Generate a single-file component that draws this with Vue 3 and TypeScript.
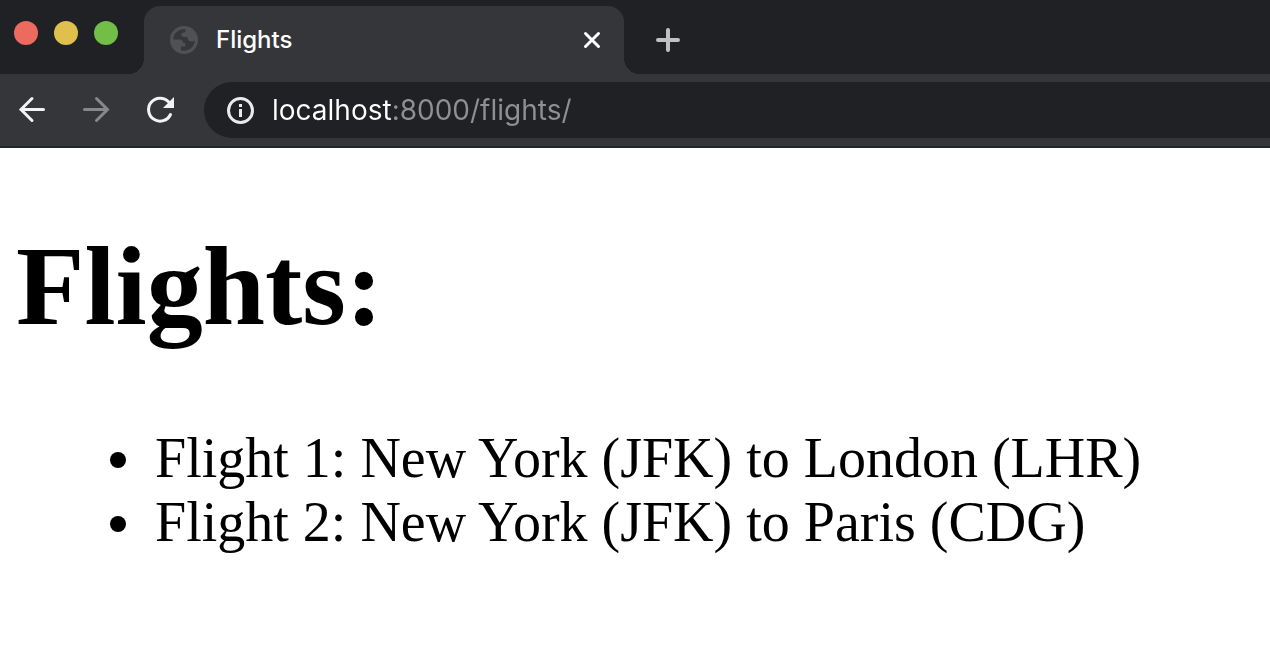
<script setup lang="ts">
import { ref } from 'vue'

interface Flight {
  id: number
  origin: string
  originCode: string
  destination: string
  destinationCode: string
}

const title = 'Flights'
const address = ref('localhost:8000/flights/')
const windowButtons = ['close', 'minimize', 'zoom']
const flights: Flight[] = [
  { id: 1, origin: 'New York', originCode: 'JFK', destination: 'London', destinationCode: 'LHR' },
  { id: 2, origin: 'New York', originCode: 'JFK', destination: 'Paris', destinationCode: 'CDG' },
]
</script>

<template>
  <div class="browser">
    <header>
      <div class="tab-strip">
        <div class="window-buttons">
          <button
            v-for="name in windowButtons"
            :key="name"
            type="button"
            :class="['light', name]"
            :aria-label="name"
          ></button>
        </div>
        <div class="tab">
          <svg class="globe" viewBox="0 0 28 28" aria-hidden="true">
            <circle cx="14" cy="14" r="14" fill="#505155" />
            <path
              d="M15.500 3.500C9 2.500 3.500 7 3.200 13.500H9.500C11.800 13.500 13.200 15 13.200 17H15.200V20.500H11V24.300C18.500 26 24.500 21.200 24.800 14.800C23.500 15.800 21.500 15.900 19.500 14.900C18 14.200 17.800 13 17.500 11H14C12.300 11 11.200 10 11.200 8.800C11.200 7.300 12.300 6.600 14 6.600C15.300 6.500 15.800 5.500 15.500 3.500Z"
              fill="#35363a"
            />
          </svg>
          <span class="tab-title">{{ title }}</span>
          <button type="button" class="icon-button" aria-label="Close tab">
            <svg width="20" height="20" viewBox="0 0 20 20" aria-hidden="true">
              <path d="M3.500 3.500L16.500 16.500M16.500 3.500L3.500 16.500" stroke="#fff" stroke-width="3" stroke-linecap="round" />
            </svg>
          </button>
        </div>
        <button type="button" class="icon-button new-tab" aria-label="New tab">
          <svg width="24" height="24" viewBox="0 0 24 24" aria-hidden="true">
            <path d="M12 2V22M2 12H22" stroke="#bfc0c3" stroke-width="4" stroke-linecap="round" />
          </svg>
        </button>
      </div>
      <div class="toolbar">
        <button type="button" class="icon-button" aria-label="Back">
          <svg width="32" height="32" viewBox="0 0 32 32" fill="none" aria-hidden="true">
            <path d="M16 4.500L5 15.500L16 26.500M5 15.500H27.500" stroke="#f1f3f4" stroke-width="3" stroke-linecap="round" />
          </svg>
        </button>
        <button type="button" class="icon-button" aria-label="Forward" disabled>
          <svg width="32" height="32" viewBox="0 0 32 32" fill="none" aria-hidden="true">
            <path d="M16.500 4.500L27.500 15.500L16.500 26.500M27.500 15.500H4.500" stroke="#87888b" stroke-width="3" stroke-linecap="round" />
          </svg>
        </button>
        <button type="button" class="icon-button" aria-label="Reload">
          <svg width="32" height="32" viewBox="0 0 32 32" fill="none" aria-hidden="true">
            <path d="M24.500 7.800A11.500 11.500 0 1 0 26.500 20.500" stroke="#f1f3f4" stroke-width="3" stroke-linecap="round" />
            <path d="M30 3V14H19Z" fill="#f1f3f4" />
          </svg>
        </button>
        <div class="omnibox">
          <button type="button" class="icon-button" aria-label="View site information">
            <svg width="28" height="28" viewBox="0 0 28 28" aria-hidden="true">
              <circle cx="14.500" cy="14.500" r="12" fill="none" stroke="#e8eaed" stroke-width="3" />
              <path d="M13 8H16V11H13ZM13 13H16V21H13Z" fill="#e8eaed" />
            </svg>
          </button>
          <input v-model="address" class="address" type="text" aria-label="Address" spellcheck="false" />
        </div>
      </div>
    </header>
    <main>
      <h1>Flights:</h1>
      <ul>
        <li v-for="f in flights" :key="f.id">
          Flight {{ f.id }}: {{ f.origin }} ({{ f.originCode }}) to {{ f.destination }} ({{ f.destinationCode }})
        </li>
      </ul>
    </main>
  </div>
</template>

<style>
body {
  margin: 0;
  background: #fff;
}
</style>

<style scoped>
.browser {
  min-height: 100vh;
  overflow: hidden;
  background: #fff;
}

button {
  padding: 0;
  border: 0;
  background: none;
}

svg {
  display: block;
  flex: none;
}

.icon-button {
  display: flex;
  flex: none;
}

.tab-strip {
  display: flex;
  align-items: center;
  padding-top: 6px;
  background: #202124;
}

.window-buttons {
  display: flex;
  gap: 16px;
  width: 130px;
  padding: 0 0 14px 14px;
  box-sizing: border-box;
  margin-right: 14px;
}

.light {
  width: 24px;
  height: 24px;
  border-radius: 50%;
}

.close {
  background: #ed6a5e;
}

.minimize {
  background: #e0c04c;
}

.zoom {
  background: #72be47;
}

.tab {
  position: relative;
  display: flex;
  align-items: center;
  flex: 0 1 480px;
  height: 68px;
  padding: 0 22px 0 26px;
  box-sizing: border-box;
  border-radius: 16px 16px 0 0;
  background: #35363a;
}

.tab::before,
.tab::after {
  content: '';
  position: absolute;
  bottom: 0;
  width: 16px;
  height: 16px;
}

.tab::before {
  right: 100%;
  background: radial-gradient(circle at 0 0, #202124 16px, #35363a 16px);
}

.tab::after {
  left: 100%;
  background: radial-gradient(circle at 100% 0, #202124 16px, #35363a 16px);
}

.globe {
  width: 28px;
  height: 28px;
}

.tab-title {
  flex: 1;
  margin-left: 18px;
  font: 500 24px/32px Inter, sans-serif;
  color: #fff;
}

.new-tab {
  margin-left: 32px;
}

.toolbar {
  display: flex;
  align-items: center;
  gap: 32px;
  height: 72px;
  padding-left: 16px;
  border-bottom: 2px solid #242529;
  background: #35363a;
}

.omnibox {
  display: flex;
  align-items: center;
  flex: 1;
  gap: 18px;
  height: 56px;
  margin-left: -4px;
  padding-left: 22px;
  border-radius: 28px 0 0 28px;
  background: #202124;
}

.address {
  flex: 1;
  min-width: 0;
  height: 40px;
  padding: 0;
  border: 0;
  outline: 0;
  font: 28px/40px Inter, sans-serif;
  color: #fff;
  caret-color: #fff;
  background: linear-gradient(90deg, #fff 120px, #8f9092 120px);
  background-clip: text;
  -webkit-text-fill-color: transparent;
}

main {
  padding: 74px 16px 16px;
  font-family: 'Liberation Serif', 'Times New Roman', serif;
  color: #000;
}

h1 {
  margin: 0 0 76px;
  font-size: 112px;
  line-height: 128px;
}

ul {
  margin: 0;
  padding-left: 139px;
  font-size: 56px;
  line-height: 64px;
  list-style: none;
}

li {
  position: relative;
}

li::before {
  content: '';
  position: absolute;
  top: 26px;
  left: -45px;
  width: 16px;
  height: 16px;
  border-radius: 50%;
  background: currentColor;
}
</style>
